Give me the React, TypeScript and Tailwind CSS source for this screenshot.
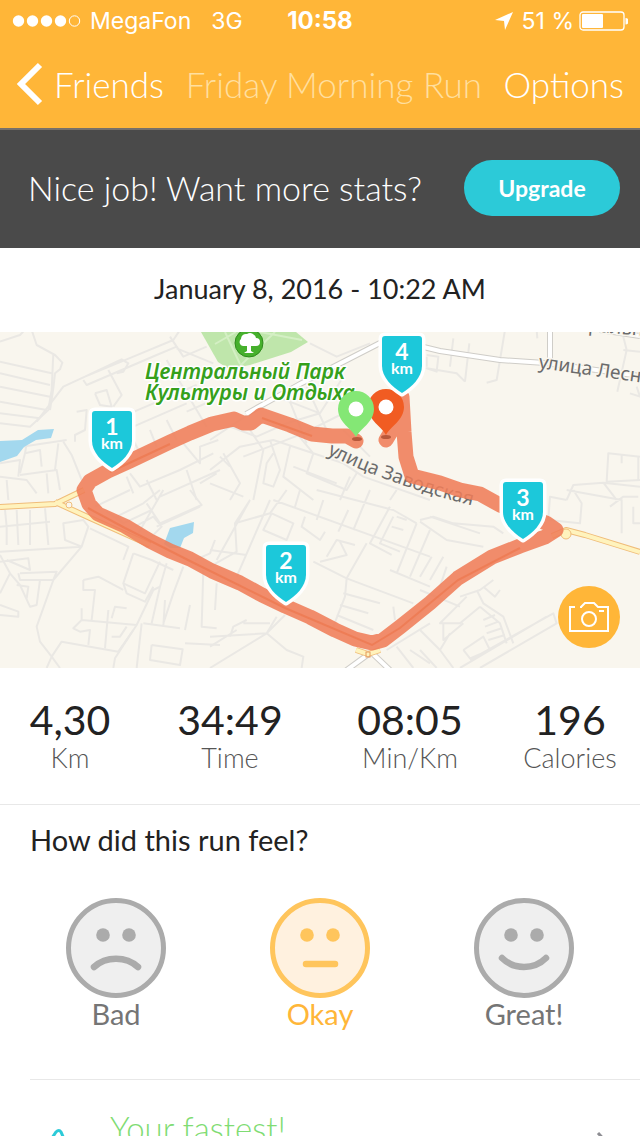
import { useState } from 'react'

const stats = [
  { value: '4,30', label: 'Km' },
  { value: '34:49', label: 'Time' },
  { value: '08:05', label: 'Min/Km' },
  { value: '196', label: 'Calories' },
]

const feelings = [
  { label: 'Bad', mouth: 'M28 69C40 58 60 58 72 69' },
  { label: 'Okay', mouth: 'M36 66H65' },
  { label: 'Great!', mouth: 'M28 60C40 72 60 72 72 60' },
]

const kmMarkers = [
  { km: 1, x: 112, y: 79 },
  { km: 2, x: 286, y: 213 },
  { km: 3, x: 523, y: 150 },
  { km: 4, x: 402, y: 4 },
]

const route =
  'M356 109L347 104L332 104L312 102L290 93L261 83L251 91L243 91L234 87L212 92L190 101L170 110L130 129L108 139L90 149L84 158L89 172L98 182L125 194L150 209L170 219L190 227L212 239L240 251L262 263L285 274L310 285L335 298L355 307L372 311L383 308L400 295L430 271L458 246L492 225L520 214L545 205L556 198L546 191L525 183L500 173L480 162L460 158L440 151L412 144L406 125L404 100L402 65'

const StatusBar = () => (
  <div className="grid h-10 grid-cols-[1fr_auto_1fr] items-center px-3 pt-0.5 font-['Inter',sans-serif] text-[23px] leading-7">
    <div className="flex items-center">
      <svg width="70" height="14" viewBox="0 0 70 14" fill="currentColor">
        <circle cx="6.5" cy="7" r="5.7" />
        <circle cx="20.5" cy="7" r="5.7" />
        <circle cx="34.5" cy="7" r="5.7" />
        <circle cx="48.5" cy="7" r="5.7" />
        <circle cx="62.5" cy="7" r="5.2" fill="none" stroke="currentColor" />
      </svg>
      <span className="ml-2">MegaFon</span>
      <span className="ml-5">3G</span>
    </div>
    <span className="text-2xl font-bold">10:58</span>
    <div className="flex items-center justify-end">
      <svg width="20" height="20" viewBox="0 0 20 20" fill="currentColor">
        <path d="M19 1L11 19L10 10L1 9Z" />
      </svg>
      <span className="ml-2">51 %</span>
      <svg className="ml-1" width="50" height="20" viewBox="0 0 50 20" fill="currentColor">
        <rect x="2" y="1" width="44" height="18" rx="3" fill="none" stroke="currentColor" strokeWidth="1.3" />
        <rect x="4" y="3" width="21" height="14" rx="1" />
        <path d="M47.500 7a3.2 3.2 0 0 1 0 6.500Z" />
      </svg>
    </div>
  </div>
)

const Nav = () => (
  <nav className="flex h-[88px] items-center justify-between px-4 text-[35px] font-light leading-10">
    <a href="#friends" className="flex items-center">
      <svg width="28" height="44" viewBox="0 0 28 44" fill="none" stroke="currentColor" strokeWidth="6">
        <path d="M24 3L5 22L24 41" />
      </svg>
      <span className="ml-2.5">Friends</span>
    </a>
    <h1 className="text-[#ffdf9f]">Friday Morning Run</h1>
    <button type="button">Options</button>
  </nav>
)

const KmMarker = ({ km, x, y }: { km: number; x: number; y: number }) => (
  <g transform={`translate(${x} ${y})`} textAnchor="middle" fill="#fff" fontWeight="700">
    <path
      d="M-17 0H17Q20 0 20 3V30C20 41 10 51 0 57C-10 51 -20 41 -20 30V3Q-20 0 -17 0Z"
      fill="#1cc8da"
      stroke="#fff"
      strokeWidth="7"
      strokeLinejoin="round"
      paintOrder="stroke"
    />
    <text y="24" fontSize="23">{km}</text>
    <text y="38" fontSize="16">km</text>
  </g>
)

const Pin = ({ x, y, color }: { x: number; y: number; color: string }) => (
  <g transform={`translate(${x} ${y})`}>
    <path d="M0 28C-4 20 -18 13 -18 0A18 18 0 0 1 18 0C18 13 4 20 0 28Z" fill={color} />
    <circle r="7.500" fill="#fff" />
  </g>
)

const Streets = () => (
  <g fill="none" stroke="#eae8e4" strokeWidth="6" strokeLinejoin="round">
    {/* north west */}
    <g transform="translate(0 -2) scale(0.3333)">
      <path d="M0 35L60 15L70 5M95 0L110 45L165 75L187 98L180 118L165 130L160 175L150 240M160 70L155 180L145 240L90 290L0 280M0 95L155 130M0 130L150 165M0 170L150 200M0 215L140 240M0 250L120 265" />
      <path d="M110 275L190 170L255 140L400 80L520 30L540 0M250 150L260 165L470 75L530 50M255 140L350 95L365 88L385 100L370 125L350 130M325 120L365 195L340 230M285 190L320 180L335 230L300 225L285 190M230 245L260 240L255 300L225 315L225 335" />
      <path d="M390 250L590 165M400 290L560 220M500 90L560 190L620 290M510 20L550 80L620 50M530 55L640 100M400 330L420 370M450 300L470 350M500 270L530 330M560 245L640 210" />
      <path d="M190 335L215 375L245 450M0 360L100 345L200 330M80 340L75 370L120 360L125 410M0 400L60 390L55 440M60 435L170 420L180 480M0 440L80 450L110 490M20 450L25 510M140 430L145 490M75 370L60 430M175 340L165 420" />
      <path d="M380 440L400 490M390 430L420 470L540 420L640 370M440 450L470 510M550 340L600 400L600 350L655 330M560 420L590 510M600 460L650 430M480 500L660 420" />
    </g>
    {/* centre */}
    <g transform="translate(210 -2) scale(0.3333)">
      <path d="M0 330L120 250L200 190M60 290L140 320L230 280L330 250M100 380L280 310L420 240M200 200L330 250L400 140M300 40L380 80L480 40M230 190L290 340M290 170L350 300" />
      <path d="M0 420L90 350L190 330L400 400L460 440L660 510M120 300L160 360L130 510M180 330L210 420L190 470L160 460L170 400L190 370M40 370L90 460L60 510M240 350L220 440L310 510M310 370L290 430L410 480L440 430M250 410L380 460M260 310L310 370M400 300L480 380" />
      <path d="M30 380L60 410M0 460L100 500M420 440L390 510M560 480L540 510" />
    </g>
    {/* north east */}
    <g transform="translate(420 -2) scale(0.3333)">
      <path d="M20 75L55 80L50 125L20 115L110 130L135 155M100 25L90 110M148 40L135 155M255 0L230 150L200 158M350 0L352 25M610 20L620 60L592 185M610 60L660 65M630 190L660 200L650 170M20 80L20 110" />
      <path d="M660 380L565 370L560 455L660 450M605 375L605 400M655 380L655 450M440 510L460 465L550 458L660 470M550 458L590 510" />
    </g>
    {/* south west */}
    <g transform="translate(0 158) scale(0.3333)">
      <path d="M0 110L150 95M15 60L20 110L20 165M50 60L55 165M90 60L90 165M135 55L145 165M0 185L245 170L265 110L250 90L190 100L195 150L245 170L160 270L110 410L120 455L155 500L180 534M155 500L185 455L355 485L400 420M0 195L30 250L0 310M0 215L85 205L90 240L20 210M60 250L170 245L160 270L60 270L55 250M30 250L60 285L90 350L110 345L120 270M50 285L85 290L80 325M0 345L55 365L55 380L0 375M155 500L140 534" />
      <path d="M270 115L385 170L370 210M400 190L455 210L520 240M400 190L370 280L435 310L480 215M370 280L380 310L435 335L460 290M250 270L295 260L370 300M250 270L250 300L285 300L275 390M245 355L245 390L410 405L460 300L480 290L500 220M325 360L315 475M335 385L345 350L380 355M245 390L220 415L240 425L270 420L265 465M410 405L345 505L340 534M335 440L360 440L380 410M425 400L410 534M430 400L540 415M455 400L480 290M490 410L495 330M550 230L520 310L490 400M570 345L555 420M610 240L605 410L650 415M555 460L660 465M455 465L548 478L540 525L450 510L455 465M585 210L630 190L645 150" />
      <path d="M285 50L390 0M320 65L370 100L455 60M370 100L350 80L430 40L480 0M405 110L460 80L485 110L455 140M440 40L480 100L605 45L570 0M470 110L600 50M415 130L490 0" />
    </g>
    {/* south centre */}
    <g transform="translate(210 158) scale(0.3333)">
      <path d="M120 30L75 100L80 185L0 230M120 30L20 210M180 30L80 260M75 100L180 70L230 0M0 180L110 195M190 30L660 200M270 0L255 50M320 0L550 60L620 100M340 30L320 90M415 60L385 125M185 70L250 100L230 150L160 120L185 70M285 80L275 110L330 150L345 125M350 200L380 150L435 165M390 155L410 195L330 215M470 160L410 265L310 215M410 265L610 340M410 265L405 320L370 410M400 310L510 340M390 345L475 370M380 375L490 420M540 50L480 160L545 195M550 80L510 160L570 185M560 80L590 90M545 110L580 120M620 100L560 250M660 120L600 260M540 240L660 290M480 0L430 120" />
      <path d="M0 440L170 430L200 380M170 430L230 480L280 500L275 534M170 430L0 534M60 440L70 410L110 390M100 400L180 400M0 470L80 420M225 375L170 430M20 280L15 360M550 350L555 390M660 340L600 400M530 480L660 400M560 470L610 534M600 480L660 520" />
    </g>
    {/* south east */}
    <g transform="translate(420 158) scale(0.3333)">
      <path d="M0 90L40 80L100 100L220 110L250 130M0 95L80 150L190 170M30 80L180 130M0 260L35 200M30 270L70 200M0 300L120 350M80 230L60 290M440 30L390 20L385 90L480 100L485 40L460 0M440 0L605 30L605 130M570 50L610 20L655 20M640 50L640 100L660 100" />
      <path d="M120 320L180 300L220 270M170 300L190 340L250 380L280 460M140 320L60 400L120 400L180 350M180 350L240 400L260 460M190 390L225 375M195 410L235 395M200 430L245 415M205 450L255 435M70 400L70 450L130 400M130 480L190 440L210 480L150 505L130 480M150 510L400 370L410 400L180 534M120 534L380 380M0 420L60 480L100 534M0 480L50 534M60 480L90 430M190 290L225 320L240 300" />
    </g>
  </g>
)

const RouteMap = () => (
  <svg
    className="block h-[336px] w-full bg-[#f9f6ee]"
    viewBox="0 0 640 336"
    preserveAspectRatio="xMidYMid slice"
    fontFamily="Lato, sans-serif"
    role="img"
    aria-label="Run route"
  >
    <path d="M201 0L218 30L229 37L250 33L291 20L308 10L296 0Z" fill="#bfe6ab" />
    <path d="M225 0L240 32M275 0L240 34M260 0L302 8M215 12L236 0" stroke="#d4efc4" strokeWidth="2" fill="none" />
    <Streets />

    <g fill="#a3d8ee">
      <path d="M0 109L22 108L38 98L54 97L51 106L36 108L24 115L17 124L0 130Z" />
      <path d="M164 212L170 196L194 190L193 201L184 206L180 216L170 216Z" />
    </g>

    {/* wider streets */}
    <g fill="none" strokeLinejoin="round">
      <path d="M246 82L300 52L380 11L403 10L440 19L500 28L545 31L640 44M550 0V30M640 4L600 -2M370 321L344 340M372 321L392 340" stroke="#cfcdc8" strokeWidth="6" />
      <path d="M246 82L300 52L380 11L403 10L440 19L500 28L545 31L640 44M550 0V30M640 4L600 -2M370 321L344 340M372 321L392 340" stroke="#fff" strokeWidth="4" />
      <path d="M0 175L55 172L84 158M55 170L90 186L150 213M552 204L566 198L585 203L640 220M356 318L368 322L380 318" stroke="#f0bd7a" strokeWidth="6" />
      <path d="M0 175L55 172L84 158M55 170L90 186L150 213M552 204L566 198L585 203L640 220M356 318L368 322L380 318" stroke="#fff3bd" strokeWidth="4" />
    </g>
    <circle cx="566" cy="202" r="5" fill="#fff3bd" stroke="#f0bd7a" />
    <circle cx="69" cy="173" r="3" fill="#f9f6ee" stroke="#f0bd7a" />
    <rect x="366" y="320" width="4" height="5" fill="none" stroke="#e59a5c" />

    <g
      fontFamily="Noto Sans, sans-serif"
      fontWeight="600"
      fontStyle="italic"
      fontSize="21"
      fill="#35a01b"
      stroke="#fff"
      strokeWidth="3"
      paintOrder="stroke"
      strokeLinejoin="round"
    >
      <text x="145" y="47">Центральный Парк</text>
      <text x="145" y="68">Культуры и Отдыха</text>
    </g>
    <circle cx="249" cy="11" r="14" fill="#46b02c" stroke="#2f8a1c" />
    <path d="M247 19V14H243A4 4 0 0 1 241 7A5 5 0 0 1 247 2A6 6 0 0 1 256 6A4 4 0 0 1 256 14H251V19L254 21H244Z" fill="#fff" />

    <g fontFamily="Noto Sans, sans-serif" fontSize="19" fill="#6b6b6b" stroke="#f9f6ee" strokeWidth="3" paintOrder="stroke">
      <path id="zavodskaya" d="M327 122Q400 158 500 180" fill="none" stroke="none" />
      <text><textPath href="#zavodskaya">улица Заводская</textPath></text>
      <text transform="translate(538 36) rotate(8)">улица Лесн</text>
      <text transform="translate(588 -1) rotate(5)">ральн</text>
    </g>

    <g fill="none" stroke="#ef7d59" strokeOpacity="0.88" strokeLinejoin="round" strokeLinecap="round">
      <path d={`${route}L398 88L386 108`} strokeWidth="15" />
    </g>
    <path d="M88 176L125 196L190 229L285 276L372 313L400 296L458 248L520 216M110 140L170 112M262 86L312 104" fill="none" stroke="#ea6638" strokeWidth="2" strokeOpacity="0.4" />
    <g fill="#b8583b">
      <ellipse cx="357" cy="107" rx="5" ry="2" />
      <ellipse cx="386" cy="105" rx="5" ry="2" />
    </g>

    <Pin x={386} y={75} color="#f15c22" />
    <Pin x={356} y={77} color="#84e775" />
    {kmMarkers.map((m) => (
      <KmMarker key={m.km} {...m} />
    ))}
  </svg>
)

const App = () => {
  const [feeling, setFeeling] = useState('Okay')

  return (
    <div className="h-screen overflow-hidden bg-white font-['Lato',sans-serif] text-[#222]">
      <header className="bg-[#ffb638] text-white">
        <StatusBar />
        <Nav />
      </header>

      <section className="flex h-[120px] items-center justify-between bg-[#4a4a4a] pl-7 pr-5 shadow-[inset_0_2px_#77706a]">
        <p className="text-[34px] font-light leading-10 text-white">Nice job! Want more stats?</p>
        <button type="button" className="h-14 w-[156px] rounded-full bg-[#2ccad8] text-[23px] font-bold text-white">
          Upgrade
        </button>
      </section>

      <h2 className="pt-[23px] pb-[25px] text-center text-[27px] leading-9">January 8, 2016 - 10:22 AM</h2>

      <section className="relative">
        <RouteMap />
        <button
          type="button"
          aria-label="Add photo"
          className="absolute right-5 bottom-5 flex size-[62px] items-center justify-center rounded-full bg-[#ffb638] text-white"
        >
          <svg width="42" height="32" viewBox="0 0 42 32" fill="none" stroke="currentColor" strokeWidth="2">
            <path d="M7 6H2V30H40V6H30L26 2H17L13 6V7" />
            <circle cx="21" cy="18" r="7" />
            <path d="M31 10H36" />
          </svg>
        </button>
      </section>

      <section className="grid grid-cols-[7fr_9fr_9fr_7fr] border-b border-[#e8e8e8] pt-8 pb-7">
        {stats.map((s) => (
          <div key={s.label} className="flex flex-col items-center">
            <span className="text-[41px] leading-10">{s.value}</span>
            <span className="text-[27px] font-light leading-9 text-[#555]">{s.label}</span>
          </div>
        ))}
      </section>

      <section>
        <h3 className="px-[30px] pt-[17px] text-[29px] leading-9">How did this run feel?</h3>
        <div className="flex justify-between px-[66px] pt-10 pb-[49px]">
          {feelings.map((f) => {
            const active = f.label === feeling
            return (
              <button
                key={f.label}
                type="button"
                aria-pressed={active}
                onClick={() => setFeeling(f.label)}
                className={`flex w-[100px] flex-col items-center text-[29px] leading-8 ${active ? 'text-[#ffb638]' : 'text-[#757575]'}`}
              >
                <svg
                  width="100"
                  height="100"
                  viewBox="0 0 100 100"
                  strokeLinecap="round"
                  className={active ? 'text-[#ffc55c]' : 'text-[#ababab]'}
                >
                  <circle cx="50" cy="50" r="47.5" fill={active ? '#fff1df' : '#efefef'} stroke="currentColor" strokeWidth="5" />
                  <circle cx="37" cy="37" r="6.800" fill="currentColor" />
                  <circle cx="63" cy="37" r="6.800" fill="currentColor" />
                  <path d={f.mouth} fill="none" stroke="currentColor" strokeWidth="6.500" />
                </svg>
                <span>{f.label}</span>
              </button>
            )
          })}
        </div>
      </section>

      <section className="ml-[30px] flex items-start border-t border-[#e8e8e8] pt-7">
        <svg className="mt-5 ml-3" width="32" height="40" viewBox="0 0 32 40" fill="none" stroke="#2ccad8" strokeWidth="3">
          <path d="M8 13L14 4Q17 1 19 4L26 20" />
        </svg>
        <p className="ml-9 flex-1 text-[33px] font-light leading-10 text-[#7fdc73]">Your fastest!</p>
        <svg className="mt-6 mr-7" width="16" height="28" viewBox="0 0 16 28" fill="none" stroke="#8e8e93" strokeWidth="3">
          <path d="M2 1L14 14L2 27" />
        </svg>
      </section>
    </div>
  )
}

export default App
